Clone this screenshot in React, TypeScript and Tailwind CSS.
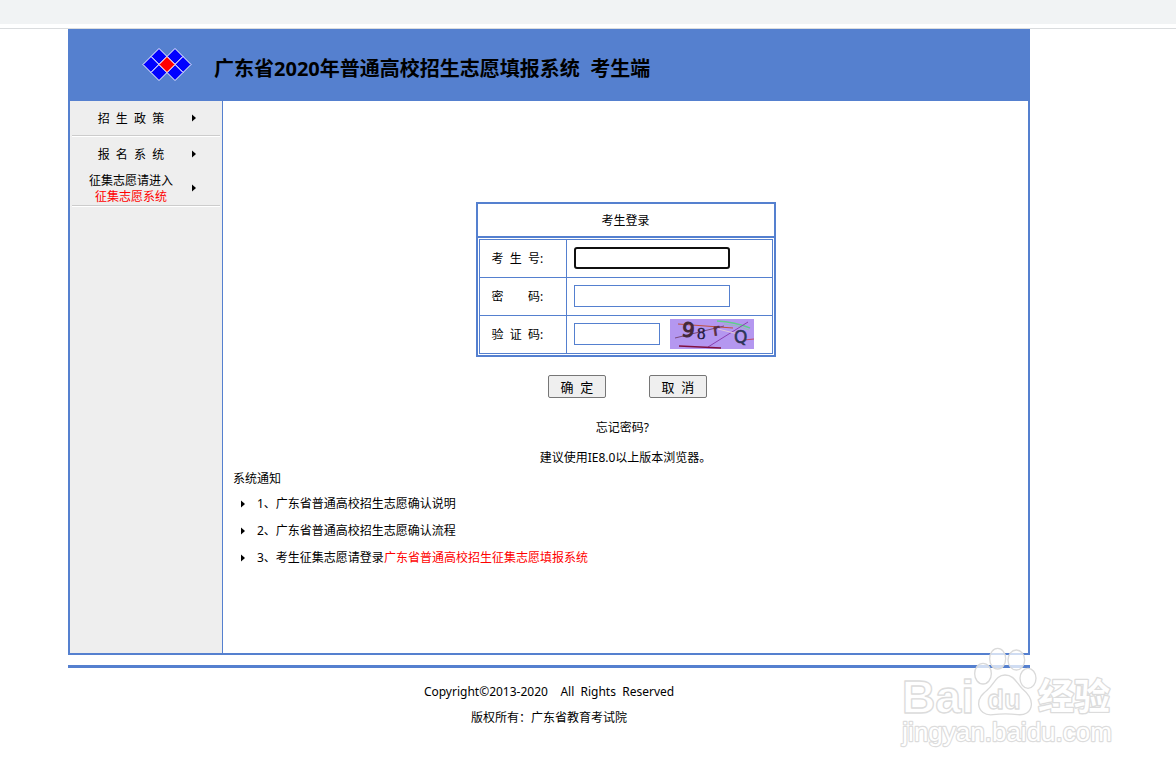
import type { ReactNode } from 'react';

const notices = [
  { text: '1、广东省普通高校招生志愿确认说明' },
  { text: '2、广东省普通高校招生志愿确认流程' },
  { text: '3、考生征集志愿请登录', highlight: '广东省普通高校招生征集志愿填报系统' }
];

function Arrow() {
  return (
    <svg viewBox="0 0 4 8" className="h-2 w-1 shrink-0" aria-hidden="true">
      <path d="M0 0.5 L4 4 L0 7.5 Z" fill="#000" />
    </svg>
  );
}

function Logo() {
  const cells = [
    [16, 8],
    [8, 16],
    [16, 24],
    [32, 8],
    [40, 16],
    [32, 24]
  ];
  return (
    <svg viewBox="-1 -0.5 50 34" className="h-[34px] w-[50px] shrink-0" aria-hidden="true">
      {cells.map(([x, y]) => (
        <path key={`${x}-${y}`} d={`M${x} ${y - 8} l8 8 l-8 8 l-8 -8 Z`} fill="#0000ff" stroke="#fff" />
      ))}
      <path d="M24 8 l8 8 l-8 8 l-8 -8 Z" fill="#ff0000" stroke="#fff" />
    </svg>
  );
}

function Captcha() {
  return (
    <svg viewBox="0 0 84 30" className="h-[30px] w-[84px]" role="img" aria-label="验证码">
      <rect width="84" height="30" fill="#b497f0" />
      <g fill="none" strokeWidth="1">
        <path d="M8 5 L63 9" stroke="#c0503c" />
        <path d="M5 19 L54 7" stroke="#7a4a78" />
        <path d="M47 2 Q65 3 80 9" stroke="#5fd08a" strokeWidth="1.5" />
        <path d="M54 5 Q68 6 79 11" stroke="#8fc0b8" />
        <path d="M38 28 L78 3" stroke="#8a3fb0" />
        <path d="M48 10 L68 15" stroke="#e0c8d8" />
        <path d="M74 21 L84 20" stroke="#c04868" />
        <path d="M9 27 L51 29" stroke="#801040" strokeWidth="1.4" />
      </g>
      <g fontFamily="'DejaVu Sans'" fill="#432838">
        <text x="12" y="18" fontSize="20" stroke="#432838" strokeWidth="1" transform="rotate(8 18 11)">9</text>
        <text x="27" y="20" fontSize="17" fill="#20183c" stroke="#20183c" strokeWidth="0.3" fontFamily="'Liberation Serif'">8</text>
        <text x="43" y="16" fontSize="16" fill="#5a2f40" stroke="#5a2f40" strokeWidth="0.8" transform="rotate(-8 48 11)">r</text>
        <text x="64" y="24" fontSize="17" fill="#2c3458" stroke="#2c3458" strokeWidth="0.5">Q</text>
      </g>
    </svg>
  );
}

function Watermark() {
  return (
    <svg
      viewBox="0 0 720 360"
      className="pointer-events-none absolute top-[640px] right-[51px] h-[120px] w-[240px]"
      aria-hidden="true"
    >
      <g fill="#fff" fillOpacity="0.72" stroke="#dadada" strokeWidth="4" strokeLinejoin="round">
        <ellipse cx="338" cy="56" rx="24" ry="31" />
        <ellipse cx="394" cy="60" rx="25" ry="30" />
        <ellipse cx="294" cy="101" rx="25" ry="31" />
        <ellipse cx="429" cy="115" rx="24" ry="30" />
        <path d="M360 105 C388 105 395 130 412 146 C432 163 441 176 439 195 C437 218 418 226 398 224 C375 221 348 221 324 224 C300 227 283 214 281 193 C280 172 294 161 309 148 C327 132 334 105 360 105 Z" />
      </g>
      <g fill="#fff" stroke="#dcdcdc" strokeWidth="4" strokeLinejoin="round">
        <text x="50" y="218" fontSize="140" fontWeight="bold" fontFamily="'Liberation Sans'">Bai</text>
        <text x="307" y="206" fontSize="82" fontWeight="bold" fontFamily="'Liberation Sans'">du</text>
        <g paintOrder="stroke" strokeWidth="8">
          <text x="459" y="209" fontSize="108" fontWeight="bold" fontFamily="'Noto Sans CJK SC'">经验</text>
          <text x="52" y="303" fontSize="78" strokeWidth="7" fontFamily="'Liberation Sans'">jingyan.baidu.com</text>
        </g>
      </g>
    </svg>
  );
}

function MenuItem({ children }: { children: ReactNode }) {
  return (
    <a href="#" className="flex h-[34px] items-center gap-0.5">
      <span className="w-[118px] pt-0.5 text-center leading-4">{children}</span>
      <Arrow />
    </a>
  );
}

function Divider() {
  return <div className="h-0.5 border-t border-b border-t-[#ccc] border-b-white" />;
}

function FieldRow({ id, label, children }: { id: string; label: string; children: ReactNode }) {
  return (
    <div className="flex h-[38px] border-b border-[#5580cf]">
      <label htmlFor={id} className="flex w-[87px] items-center border-r border-[#5580cf] pl-3">
        {label}
      </label>
      <div className="flex items-center gap-2.5 pb-0.5 pl-[7px]">{children}</div>
    </div>
  );
}

export default function App() {
  return (
    <div className="relative min-h-screen bg-white font-['Noto_Sans','Noto_Sans_CJK_SC',sans-serif] text-xs text-black">
      <div className="h-6 bg-[#f1f3f4]" />
      <div className="h-[5px] border-b border-[#dadcde]" />

      <div className="pr-[78px]">
        <div className="mx-auto max-w-[962px]">
          <header className="flex h-[72px] items-center gap-[22px] bg-[#5580cf] pl-[74px]">
            <Logo />
            <h1 className="pt-2 text-xl leading-7 font-bold whitespace-nowrap">
              广东省2020年普通高校招生志愿填报系统&nbsp; 考生端
            </h1>
          </header>

          <div className="flex min-h-[554px] border-x-2 border-b-2 border-[#5580cf]">
            <nav className="w-[153px] shrink-0 border-r border-[#5580cf] bg-[#eee] px-0.5">
              <MenuItem>招&nbsp; 生&nbsp; 政&nbsp; 策</MenuItem>
              <Divider />
              <MenuItem>报&nbsp; 名&nbsp; 系&nbsp; 统</MenuItem>
              <MenuItem>
                征集志愿请进入
                <br />
                <span className="text-[#ff0000]">征集志愿系统</span>
              </MenuItem>
              <Divider />
            </nav>

            <main className="flex-1 pt-[101px]">
              <form onSubmit={(e) => e.preventDefault()}>
                <div className="mx-auto w-[300px] border-2 border-[#5580cf]">
                  <h2 className="border-b-2 border-[#5580cf] pt-0.5 text-center leading-[30px]">考生登录</h2>
                  <div className="p-px">
                    <div className="border border-b-0 border-[#5580cf]">
                      <FieldRow id="candidate" label={'考\u00a0 生\u00a0 号:'}>
                        <input
                          id="candidate"
                          type="text"
                          className="h-[22px] w-[156px] rounded-[3px] border-2 border-[#101010] px-1 outline-none"
                        />
                      </FieldRow>
                      <FieldRow id="password" label={'密\u3000\u00a0 \u00a0 码:'}>
                        <input
                          id="password"
                          type="password"
                          className="h-[22px] w-[156px] border border-[#5580cf] px-1 outline-none"
                        />
                      </FieldRow>
                      <FieldRow id="captcha" label={'验\u00a0 证\u00a0 码:'}>
                        <input
                          id="captcha"
                          type="text"
                          className="h-[22px] w-[86px] border border-[#5580cf] px-1 outline-none"
                        />
                        <Captcha />
                      </FieldRow>
                    </div>
                  </div>
                </div>

                <div className="mt-[18px] flex justify-center gap-[43px] pl-1 text-[13px]">
                  <button
                    type="submit"
                    className="h-[23px] w-[58px] rounded-[2px] border border-[#767676] bg-[#efefef] leading-5"
                  >
                    确&nbsp; 定
                  </button>
                  <button
                    type="reset"
                    className="h-[23px] w-[58px] rounded-[2px] border border-[#767676] bg-[#efefef] leading-5"
                  >
                    取&nbsp; 消
                  </button>
                </div>
              </form>

              <p className="mt-5 text-center leading-5">
                <a href="#">忘记密码?</a>&nbsp;&nbsp;
              </p>
              <p className="mt-2.5 text-center leading-5">建议使用IE8.0以上版本浏览器。</p>

              <section className="pl-2.5">
                <h2 className="leading-[22px]">系统通知</h2>
                <ul>
                  {notices.map((notice) => (
                    <li key={notice.text} className="flex items-center gap-3 pl-2 leading-[27px]">
                      <Arrow />
                      <a href="#">
                        {notice.text}
                        <span className="text-[#ff0000]">{notice.highlight}</span>
                      </a>
                    </li>
                  ))}
                </ul>
              </section>
            </main>
          </div>

          <footer className="mt-2.5 border-t-[3px] border-[#5580cf] pt-[11px] text-center leading-[26px]">
            <p>Copyright©2013-2020&nbsp; &nbsp; All&nbsp; Rights&nbsp; Reserved</p>
            <p>版权所有：广东省教育考试院</p>
          </footer>
        </div>
      </div>

      <Watermark />
    </div>
  );
}
